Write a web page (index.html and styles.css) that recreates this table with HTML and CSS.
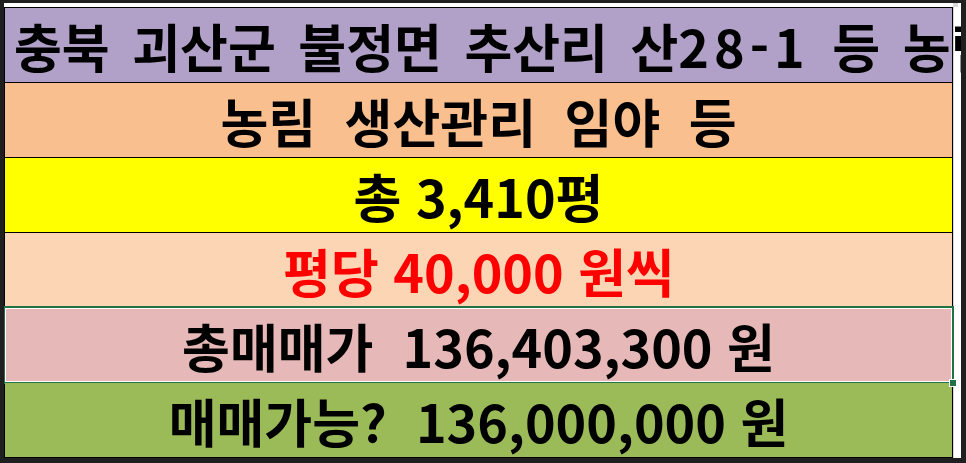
FILE: index.html
```
<!DOCTYPE html>
<html lang="ko">
<head>
<meta charset="utf-8">
<link rel="stylesheet" href="styles.css">
</head>
<body>
<div class="frame">
  <div class="sheet">
    <div class="topstrip"></div>
    <div class="grid">
      <div class="table">
        <div class="row r1"><span class="txt">충북 괴산군 불정면 추산리 산<span class="num">28-1</span> 등 농림지</span></div>
        <div class="row r2"><span class="txt">농림 생산관리 임야 등</span></div>
        <div class="row r3"><span class="txt">총 3,410평</span></div>
        <div class="row r4"><span class="txt red">평당 40,000 원씩</span></div>
        <div class="row r5 selected"><span class="txt">총매매가&nbsp;&nbsp;136,403,300 원</span></div>
        <div class="row r6"><span class="txt">매매가능?&nbsp;&nbsp;136,000,000 원</span></div>
      </div>
      <div class="sidecol"></div>
    </div>
  </div>
</div>
</body>
</html>
```

FILE: styles.css
```
html, body {
  margin: 0;
  padding: 0;
  background: #1f1f1f;
}
.frame {
  width: 966px;
  height: 463px;
  padding: 3px 5px 0 4px;
  box-sizing: border-box;
  background: #1f1f1f;
  overflow: hidden;
}
.sheet {
  background: #ffffff;
  width: 957px;
  overflow: hidden;
}
.topstrip {
  height: 4px;
  background: #ffffff;
  border-right: 5px solid #d9d9d9;
  width: 949px;
}
.grid {
  display: flex;
  align-items: stretch;
}
.table {
  width: 949px;
  flex: none;
  border: 1px solid #000;
  border-bottom: none;
  box-sizing: border-box;
}
.sidecol {
  flex: 1;
  background: #fff;
  border-left: 1px solid #d4d4d4;
}
.row {
  height: 74px;
  border-bottom: 1px solid #000;
  display: flex;
  align-items: center;
  justify-content: center;
  position: relative;
  font-family: "Noto Sans CJK KR", "Noto Sans", sans-serif;
  font-weight: 700;
  font-size: 52px;
  color: #000;
  white-space: nowrap;
}
.r1 {
  background: #b1a0c7;
  justify-content: flex-start;
  z-index: 2;
  word-spacing: 8px;
}
.r1 .txt {
  margin-left: 9px;
}
.num {
  letter-spacing: 5px;
}
.r2 { background: #fabf8f; word-spacing: 14px; }
.r3 { background: #ffff00; }
.r4 { background: #fcd5b4; border-bottom-color: #217346; }
.r5 { background: #e6b8b7; }
.r6 { background: #9bbb59; }
.txt {
  line-height: 1;
  position: relative;
  top: 1px;
}
.red { color: #ff0000; }
.selected::after {
  content: "";
  position: absolute;
  left: -2px;
  right: -2px;
  top: -2px;
  bottom: -2px;
  border: 2px solid #217346;
  box-shadow: inset 0 0 0 1px #ffffff;
  pointer-events: none;
}
.selected::before {
  content: "";
  position: absolute;
  right: -5px;
  bottom: -5px;
  width: 6px;
  height: 6px;
  background: #217346;
  border: 1px solid #fff;
  z-index: 3;
}
```
